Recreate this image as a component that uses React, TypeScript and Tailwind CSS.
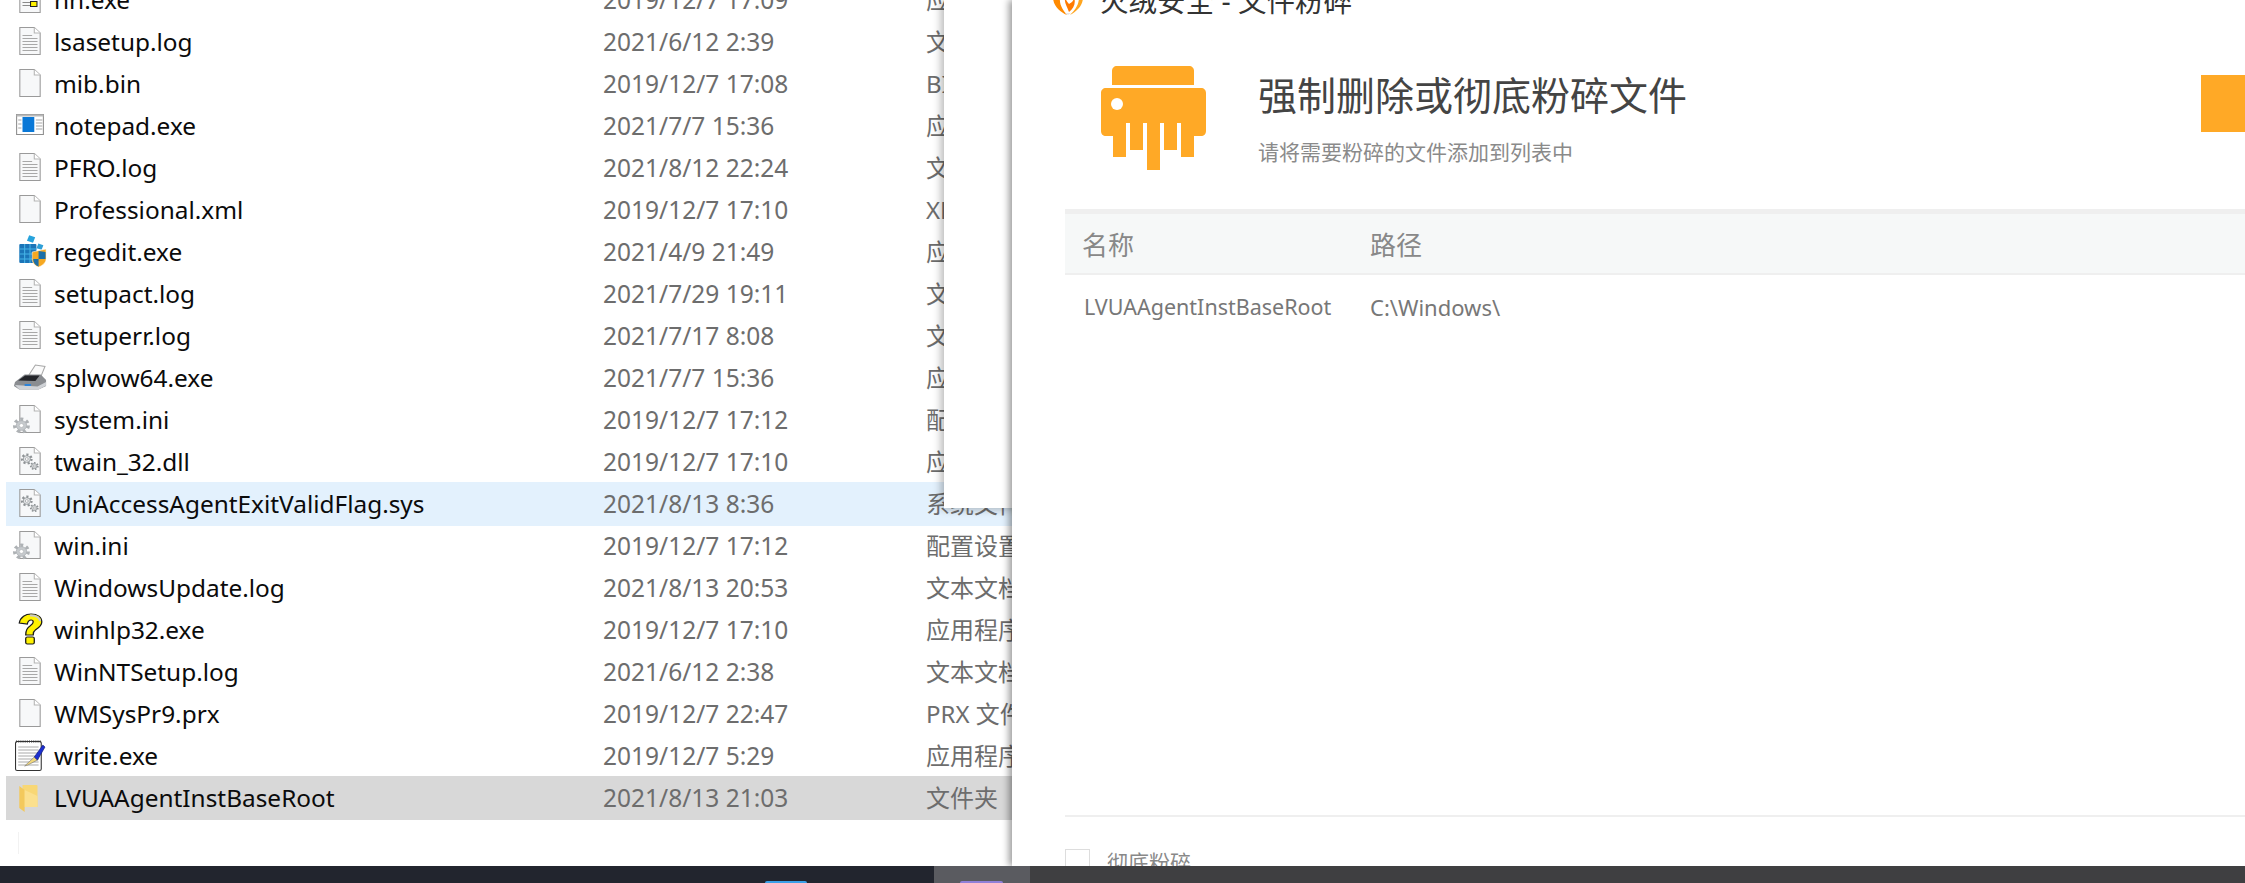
import React from 'react';

type IconName = 'log' | 'blank' | 'chm' | 'notepad' | 'regedit' | 'printer' | 'ini' | 'dll' | 'help' | 'write' | 'folder';

const files: { name: string; date: string; type: string; icon: IconName; state?: 'hover' | 'selected' }[] = [
  { name: 'hh.exe', date: '2019/12/7 17:09', type: '应用程序', icon: 'chm' },
  { name: 'lsasetup.log', date: '2021/6/12 2:39', type: '文本文档', icon: 'log' },
  { name: 'mib.bin', date: '2019/12/7 17:08', type: 'BIN 文件', icon: 'blank' },
  { name: 'notepad.exe', date: '2021/7/7 15:36', type: '应用程序', icon: 'notepad' },
  { name: 'PFRO.log', date: '2021/8/12 22:24', type: '文本文档', icon: 'log' },
  { name: 'Professional.xml', date: '2019/12/7 17:10', type: 'XML 文档', icon: 'blank' },
  { name: 'regedit.exe', date: '2021/4/9 21:49', type: '应用程序', icon: 'regedit' },
  { name: 'setupact.log', date: '2021/7/29 19:11', type: '文本文档', icon: 'log' },
  { name: 'setuperr.log', date: '2021/7/17 8:08', type: '文本文档', icon: 'log' },
  { name: 'splwow64.exe', date: '2021/7/7 15:36', type: '应用程序', icon: 'printer' },
  { name: 'system.ini', date: '2019/12/7 17:12', type: '配置设置', icon: 'ini' },
  { name: 'twain_32.dll', date: '2019/12/7 17:10', type: '应用程序扩展', icon: 'dll' },
  { name: 'UniAccessAgentExitValidFlag.sys', date: '2021/8/13 8:36', type: '系统文件', icon: 'dll', state: 'hover' },
  { name: 'win.ini', date: '2019/12/7 17:12', type: '配置设置', icon: 'ini' },
  { name: 'WindowsUpdate.log', date: '2021/8/13 20:53', type: '文本文档', icon: 'log' },
  { name: 'winhlp32.exe', date: '2019/12/7 17:10', type: '应用程序', icon: 'help' },
  { name: 'WinNTSetup.log', date: '2021/6/12 2:38', type: '文本文档', icon: 'log' },
  { name: 'WMSysPr9.prx', date: '2019/12/7 22:47', type: 'PRX 文件', icon: 'blank' },
  { name: 'write.exe', date: '2019/12/7 5:29', type: '应用程序', icon: 'write' },
  { name: 'LVUAAgentInstBaseRoot', date: '2021/8/13 21:03', type: '文件夹', icon: 'folder', state: 'selected' },
];

function Page({ children }: { children?: React.ReactNode }) {
  return (
    <>
      <path d="M6.5 1.5H20L25.5 7V28.5H6.5Z" fill="#f7f8f9" stroke="#9a9a9a" />
      <path d="M20 1.5V7H25.5" fill="#fff" stroke="#b5b5b5" />
      {children}
    </>
  );
}

function Gear({ cx, cy, r, fill, stroke }: { cx: number; cy: number; r: number; fill: string; stroke: string }) {
  return (
    <g>
      <circle cx={cx} cy={cy} r={r} fill="none" stroke={stroke} strokeWidth={r * 0.55} strokeDasharray={`${r * 0.45} ${r * 0.45}`} />
      <circle cx={cx} cy={cy} r={r * 0.78} fill={fill} stroke={stroke} strokeWidth="0.8" />
      <circle cx={cx} cy={cy} r={r * 0.32} fill="#fff" stroke={stroke} strokeWidth="0.6" />
    </g>
  );
}

function FileIcon({ name }: { name: IconName }) {
  let body: React.ReactNode = null;
  if (name === 'log') {
    body = (
      <Page>
        <path d="M9 9.5H18M9 12.5H23M9 15.5H23M9 18.5H23M9 21.5H23M9 24.5H23" stroke="#a8a8a8" strokeWidth="1" />
      </Page>
    );
  } else if (name === 'blank') {
    body = <Page />;
  } else if (name === 'chm') {
    body = (
      <>
        <Page>
          <path d="M9 12.5H20M9 15.5H20M9 18.5H20M9 21.5H16" stroke="#8a8a8a" />
        </Page>
        <rect x="16.5" y="17.5" width="6" height="5" fill="#fff200" stroke="#222" />
      </>
    );
  } else if (name === 'notepad') {
    body = (
      <>
        <rect x="3.5" y="4.5" width="25" height="20" fill="#fff" stroke="#8e8e8e" />
        <rect x="3.5" y="4.5" width="25" height="2" fill="#b9b9b9" />
        <rect x="9" y="7" width="11" height="15" fill="#0a78d7" />
        <path d="M21.5 10H27.5M21.5 13H27.5M21.5 16H27.5M21.5 19H27.5M5 10H8M5 14H8M5 18H8" stroke="#a5a5a5" />
      </>
    );
  } else if (name === 'regedit') {
    body = (
      <>
        <rect x="14" y="0" width="6" height="6" fill="#27a3dc" transform="rotate(20 17 3)" />
        <rect x="23" y="8" width="5" height="5" fill="#2f9fd6" transform="rotate(20 25 10)" />
        <rect x="6" y="8" width="16" height="19" rx="1" fill="#1b75b8" />
        <path d="M6 13H22M6 18H22M6 23H22M11 8V27M16 8V27" stroke="#45b3e6" />
        <path d="M18 16L31 13V23C31 27 27 30 24 31C21 30 18 27 18 23Z" fill="#f6a821" stroke="#fff" strokeWidth="0.5" />
        <path d="M24 14.5V30.5C21.5 29.5 19 27 19 23H24ZM24 23H30.5V16L24 15Z" fill="#1c6fa8" />
      </>
    );
  } else if (name === 'printer') {
    body = (
      <>
        <path d="M15 13L21 3L30 4.5L26 15Z" fill="#fbfbfb" stroke="#a9a9a9" />
        <path d="M2 20L11 12.5H26L31 18V24L24 27.5H6L1 24Z" fill="#8a8d91" />
        <path d="M5 18.5L11.5 13.5H25L21 19Z" fill="#23252a" />
        <path d="M2 23L23 24.5L31 20V23.5L24 27.5H6Z" fill="#cfd2d6" />
        <rect x="11" y="22" width="6" height="2" fill="#2d83d8" />
      </>
    );
  } else if (name === 'ini') {
    body = (
      <>
        <Page />
        <Gear cx={8} cy={21.5} r={6.2} fill="#c6cacd" stroke="#aeb2b5" />
      </>
    );
  } else if (name === 'dll') {
    body = (
      <Page>
        <Gear cx={13} cy={13} r={4.3} fill="#e4e6e8" stroke="#8f9396" />
        <Gear cx={20} cy={20} r={3.2} fill="#e4e6e8" stroke="#8f9396" />
      </Page>
    );
  } else if (name === 'help') {
    body = (
      <>
        <path
          d="M6 9C7 3 12 0 17 0C23 0 27 3 27 8C27 12 24 14 21 16C19.500 17 19 18 19 21H12C12 16 13 14 16 12C18 10.500 19 9.500 19 8C19 6.500 18 6 17 6C15 6 14 7 13.500 10Z"
          fill="#fff200"
          stroke="#1a1a1a"
          strokeWidth="1.2"
        />
        <rect x="12" y="23" width="8" height="7" rx="1.500" fill="#fff200" stroke="#1a1a1a" strokeWidth="1.2" />
        <path d="M16 1.500C21 1 25 3.500 25.500 7" stroke="#c9c9c9" strokeWidth="2" fill="none" />
      </>
    );
  } else if (name === 'write') {
    body = (
      <>
        <rect x="2.500" y="1.500" width="24" height="29" rx="1.500" fill="#fff" stroke="#333" />
        <path d="M3 1.500H26" stroke="#333" strokeWidth="2" strokeDasharray="1 1" />
        <path d="M5 7H24M5 10H24M5 13H24M5 16H24M5 19H24M5 22H24M5 25H24" stroke="#a9a9a9" />
        <path d="M11 26L20 17L23 20L14 25Z" fill="#f1d77b" stroke="#777" strokeWidth="0.6" />
        <path d="M20 17L28 5L30 7L23 20Z" fill="#1c2fd0" stroke="#101a70" strokeWidth="0.6" />
      </>
    );
  } else if (name === 'folder') {
    body = (
      <>
        <path d="M9 3H22C23 3 23 4 23 4V25H9Z" fill="#f8d775" />
        <path d="M6 4L11 8V30L6 26Z" fill="#f3c95c" />
        <path d="M11 8L23 14V25H11Z" fill="#fbe08e" />
      </>
    );
  }
  return (
    <svg viewBox="0 0 32 32" className="w-8 h-8 shrink-0 overflow-visible">
      <g transform="translate(0.857 0) scale(1.0714 1)">{body}</g>
    </svg>
  );
}

function FileRow({ file }: { file: (typeof files)[number] }) {
  const bg = file.state === 'hover' ? 'bg-[#e3f1fd]' : file.state === 'selected' ? 'bg-[#d8d8d8]' : '';
  return (
    <div className={`h-11 -mb-0.5 pl-1.5 flex items-center whitespace-nowrap ${bg}`}>
      <FileIcon name={file.icon} />
      <div className="w-[559px] shrink-0 pl-[10px] text-[#0b0b0b] text-[24.4px]">{file.name}</div>
      <div className="w-[323px] shrink-0 text-[#6d6d6d] text-[24.5px]">{file.date}</div>
      <div className="shrink-0 text-[#6d6d6d] text-[24px]">{file.type}</div>
    </div>
  );
}

function ShredderIcon() {
  return (
    <svg viewBox="0 0 105 104" className="w-[105px] h-[104px]" fill="#ffa926">
      <path d="M11 5C11 2 13 0 16 0H88C91 0 93 2 93 5V19H11Z" />
      <path d="M5 22H100C103 22 105 24 105 27V65C105 68 103 70 100 70H93V91H80V57H76V84H63V57H59V104H46V57H42V84H29V57H25V91H12V70H5C2 70 0 68 0 65V27C0 24 2 22 5 22Z" />
      <circle cx="16" cy="38" r="6" fill="#fff" />
    </svg>
  );
}

function FlameLogo() {
  return (
    <svg viewBox="0 0 32 32" className="w-8 h-8 shrink-0">
      <path d="M1 14C1 23 8 29 15 32C11 27 7 22 8 14Z" fill="#ff8a00" />
      <path d="M13 14C12 20 15 23 17 29C22 25 24 20 22 14C22 18 19 20 17 21C15 19 14 17 13 14Z" fill="#ff7a00" />
      <path d="M31 14C31 23 25 28 18 32C23 27 27 22 27 14Z" fill="#ffa51f" />
      <path d="M13 30L16 32L19 30Z" fill="#e6e6e6" />
    </svg>
  );
}

export default function App() {
  return (
    <div className="w-[2245px] h-[883px] overflow-hidden bg-white flex flex-col font-['Noto_Sans','Noto_Sans_CJK_SC',sans-serif]">
      <div className="h-[866px] flex overflow-hidden">
        {/* Explorer list, other windows sit over it */}
        <div className="relative w-[1012px] shrink-0 overflow-hidden">
          <div className="pl-1.5 -mt-[22px]">
            {files.map(f => (
              <FileRow key={f.name} file={f} />
            ))}
          </div>
          <div className="absolute left-[18px] top-[832px] w-px h-[22px] bg-[#f2f2f2]" />
          <div className="absolute left-[944px] top-0 w-[80px] h-[508px] bg-white shadow-[-3px_1px_8px_rgba(0,0,0,0.28)]" />
        </div>

        {/* Huorong shredder window */}
        <div className="relative z-10 flex-1 min-w-0 bg-white shadow-[-3px_0_7px_rgba(0,0,0,0.4)] flex flex-col overflow-hidden">
          <div className="h-[15px] pl-10 flex items-end">
            <FlameLogo />
            <div className="ml-4 mb-[-4px] text-[28.5px] leading-[36px] text-[#333] whitespace-nowrap">火绒安全 - 文件粉碎</div>
          </div>

          <div className="h-[194px] pl-[89px] flex items-start relative">
            <div className="mt-[51px]">
              <ShredderIcon />
            </div>
            <div className="ml-[52px] mt-[53px]">
              <div className="text-[39px] leading-[54px] text-[#444] whitespace-nowrap">强制删除或彻底粉碎文件</div>
              <div className="mt-[15px] text-[21px] leading-[30px] text-[#8a8a8a] whitespace-nowrap">请将需要粉碎的文件添加到列表中</div>
            </div>
            <div className="absolute right-0 top-[60px] w-11 h-[57px] bg-[#ffa926]" />
          </div>

          <div className="ml-[53px] flex-1 flex flex-col">
            <div className="h-[66px] pt-1 bg-[#f6f8f8] border-t-[5px] border-b-2 border-[#efefef] flex items-center text-[26px] text-[#888]">
              <div className="w-[305px] pl-[17px]">名称</div>
              <div>路径</div>
            </div>
            <div className="h-[64px] flex items-center text-[21.5px] text-[#777]">
              <div className="w-[305px] pl-[19px] whitespace-nowrap">LVUAAgentInstBaseRoot</div>
              <div className="text-[22px]">C:\Windows\</div>
            </div>
            <div className="flex-1" />
            <div className="h-[51px] border-t-2 border-[#efefef] pt-8 flex items-start">
              <div className="w-[25px] h-[25px] border border-[#ddd] shrink-0" />
              <div className="ml-[17px] text-[21px] leading-[26px] text-[#888] whitespace-nowrap">彻底粉碎</div>
            </div>
          </div>
        </div>
      </div>

      {/* Taskbar */}
      <div className="h-[17px] flex bg-[#3f3f41]">
        <div className="w-[934px] bg-[#22252e] relative">
          <div className="absolute left-[765px] top-[15px] w-[42px] h-[2px] rounded-t bg-[#3aa0e8]" />
        </div>
        <div className="w-24 bg-[#5a5b60] relative">
          <div className="absolute left-[26px] top-[15px] w-[43px] h-[2px] rounded-t bg-[#8f7fd8]" />
        </div>
      </div>
    </div>
  );
}
